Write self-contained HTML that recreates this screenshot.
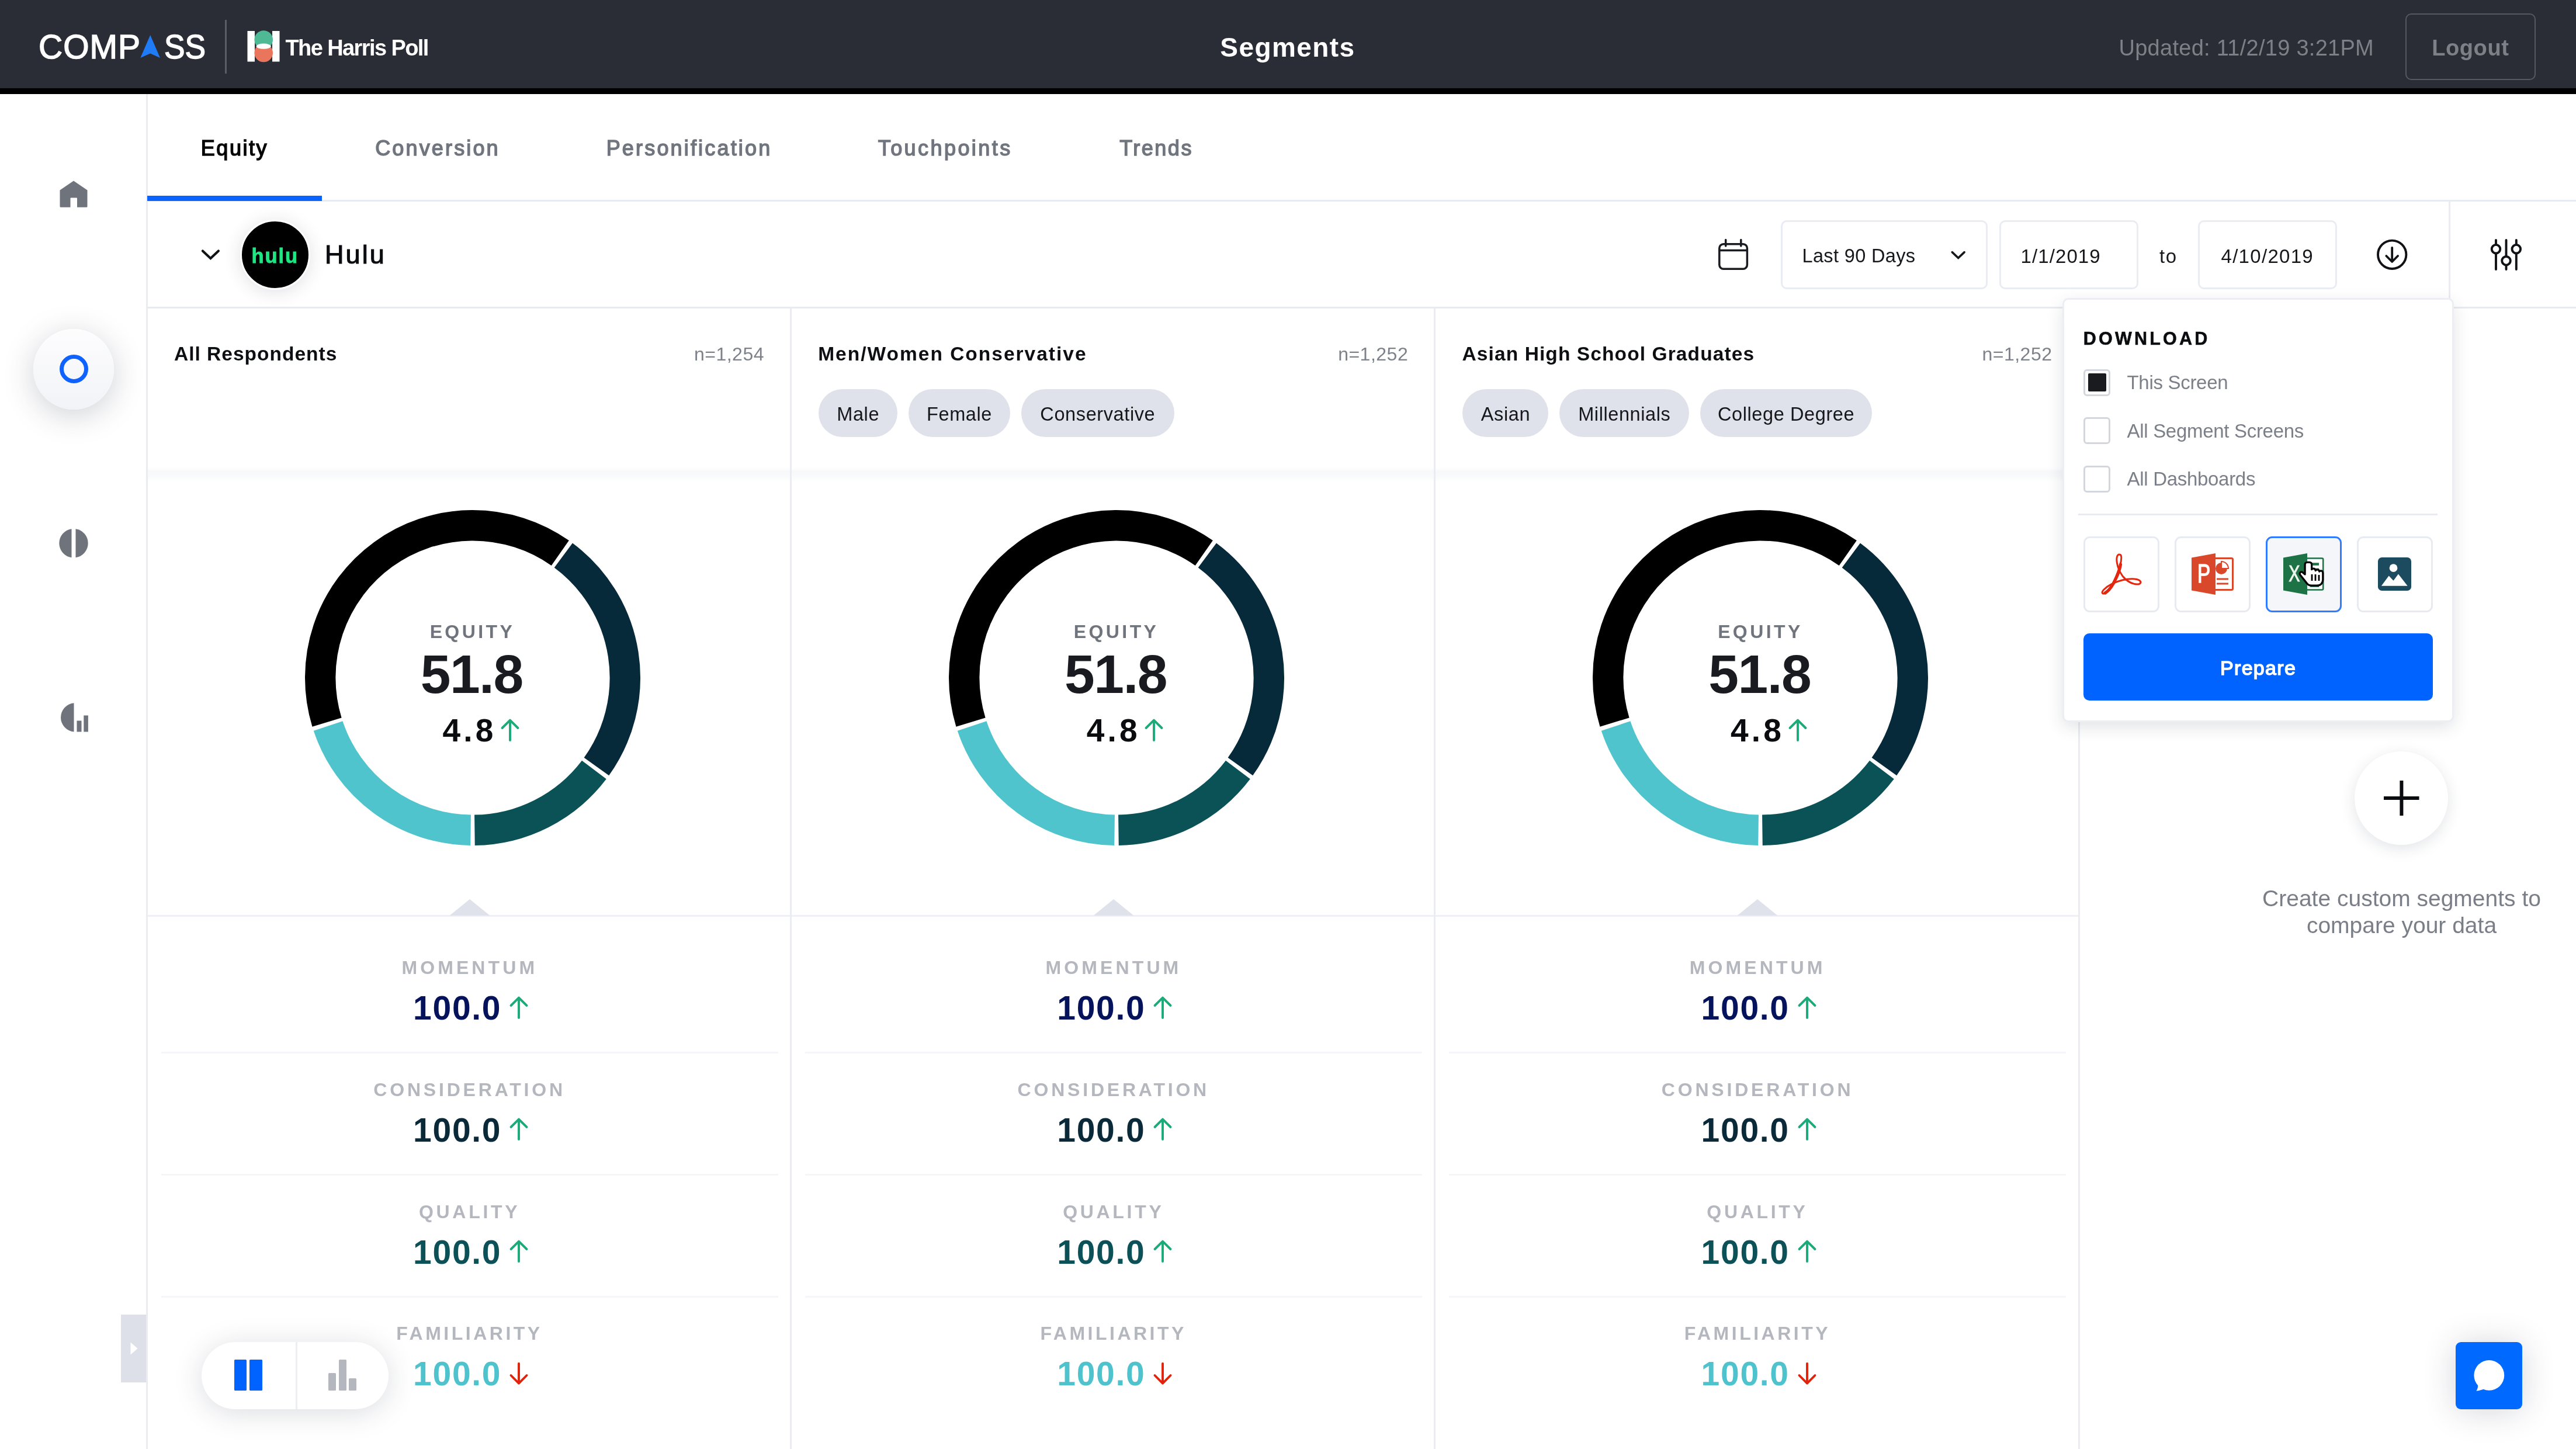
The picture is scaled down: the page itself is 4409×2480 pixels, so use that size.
<!DOCTYPE html>
<html lang="en">
<head>
<meta charset="utf-8">
<title>Compass – Segments – Equity</title>
<style>
html,body{margin:0;padding:0;}
body{width:4409px;height:2480px;overflow:hidden;background:#fff;position:relative;font-family:"Liberation Sans",sans-serif;color:#000;}
.a{position:absolute;}
.t{position:absolute;white-space:nowrap;line-height:1;margin:0;padding:0;font-weight:400;}
svg{position:absolute;overflow:visible;}
header{position:absolute;left:0;top:0;width:4409px;height:151px;background:#2a2d35;border-bottom:10px solid #000;}
.vline{position:absolute;width:3px;background:#eaecf2;}
.hline{position:absolute;height:3px;background:#e8eaf1;}
.box{position:absolute;box-sizing:border-box;border:3px solid #eaecf3;border-radius:10px;background:#fff;}
.chip{position:absolute;height:82px;border-radius:41px;background:#dfe2ea;top:666px;}
.sep{position:absolute;height:3px;background:#f5f6f9;}
.cb{position:absolute;box-sizing:border-box;width:46px;height:46px;border:3px solid #d3d6dd;border-radius:6px;background:#fff;left:3566px;}
.ib{position:absolute;box-sizing:border-box;width:130px;height:130px;border:3px solid #e8eaf1;border-radius:11px;background:#fff;top:918px;}
</style>
</head>
<body>
<div id="root" style="position:absolute;left:0;top:0;width:4409px;height:2480px;will-change:transform">
<header>
<span class="t" style="top:51.9px;font-size:57px;color:#fff;letter-spacing:1.0px;left:66.0px;-webkit-text-stroke:1.5px #fff;">COMP</span>
<span class="t" style="top:67.3px;font-size:28px;color:#1f7bf6;left:247.5px;">A</span>
<svg class="a" style="left:240px;top:60px" width="35" height="40" viewBox="0 0 35 40"><path d="M17.2 0 L34 39 L17.2 31.5 L0.3 39 Z" fill="#1f7bf6"/></svg>
<span class="t" style="top:51.9px;font-size:57px;color:#fff;left:281.0px;-webkit-text-stroke:1.5px #fff;transform:scaleX(0.935);transform-origin:0 0;">SS</span>
<div class="a" style="left:385px;top:34px;width:3px;height:92px;background:#5b5d63"></div>
<svg class="a" style="left:423px;top:52px" width="56" height="54" viewBox="0 0 56 54"><rect x="0.5" y="1" width="12.5" height="52.5" fill="#fff"/><rect x="43" y="1" width="12.5" height="52.5" fill="#fff"/><circle cx="28.2" cy="16" r="15.8" fill="#4fb894"/><circle cx="28.2" cy="38.5" r="15.8" fill="#e8755c"/><ellipse cx="28.2" cy="27.2" rx="12.5" ry="4.6" fill="#fff"/></svg>
<span class="t" style="top:63.1px;font-size:38px;font-weight:700;color:#fff;letter-spacing:-1.6px;left:488.5px;">The Harris Poll</span>
<h1 class="t" style="top:57.6px;font-size:46px;font-weight:700;color:#fff;letter-spacing:1.4px;left:2203.9px;transform:translateX(-50%);">Segments</h1>
<span class="t" style="top:62.8px;font-size:38px;color:#7d8087;letter-spacing:0.27px;left:3626.5px;">Updated: 11/2/19 3:21PM</span>
<div class="a" style="left:4117px;top:23px;width:223px;height:114px;box-sizing:border-box;border:2.5px solid #55585f;border-radius:10px"></div>
<a class="t" style="top:62.8px;font-size:38px;font-weight:700;color:#7d8087;letter-spacing:0.6px;left:4228.3px;transform:translateX(-50%);">Logout</a>
</header>
<nav>
<div class="vline" style="left:250px;top:161px;height:2319px"></div>
<svg style="left:101px;top:309px" width="50" height="46" viewBox="0 0 50 46"><path d="M25 0.5 L48.5 16.5 V44.5 Q48.5 45.8 47 45.8 H31 V30.5 Q31 29.5 30 29.5 H20.5 Q19.5 29.5 19.5 30.5 V45.8 H3 Q1.5 45.8 1.5 44.5 V16.5 Z" fill="#6f737c"/></svg>
<div class="a" style="left:57px;top:563px;width:138px;height:138px;border-radius:50%;background:linear-gradient(#fdfdfe,#f2f3f7);box-shadow:0 10px 52px rgba(40,45,70,0.22)"></div>
<div class="a" style="left:101.5px;top:607px;width:49px;height:49px;box-sizing:border-box;border-radius:50%;border:7.5px solid #0f62fe"></div>
<svg style="left:101px;top:905px" width="50" height="50" viewBox="0 0 50 50"><path d="M21.5 0.3 A24.7 24.7 0 0 0 21.5 49.2 Z" fill="#6f737c"/><path d="M28.5 0.3 A24.7 24.7 0 0 1 28.5 49.2 Z" fill="#6f737c"/></svg>
<svg style="left:101px;top:1203px" width="50" height="50" viewBox="0 0 50 50"><path d="M25.5 0.3 A24.7 24.7 0 0 0 25.5 49.5 Z" fill="#6f737c"/><rect x="30.5" y="30.5" width="8" height="19" fill="#6f737c"/><rect x="42.3" y="21.5" width="7.6" height="28" fill="#6f737c"/></svg>
</nav>
<div class="hline" style="left:252px;top:342px;width:4157px"></div>
<div class="a" style="left:252px;top:335px;width:299px;height:9px;background:#0a62ff"></div>
<a class="t" style="top:235.5px;font-size:36px;color:#050506;letter-spacing:2.55px;left:343.8px;-webkit-text-stroke:1.5px #050506;">Equity</a>
<a class="t" style="top:235.5px;font-size:36px;color:#71757e;letter-spacing:3.15px;left:642.2px;-webkit-text-stroke:1.5px #71757e;">Conversion</a>
<a class="t" style="top:235.5px;font-size:36px;color:#71757e;letter-spacing:3.17px;left:1037.7px;-webkit-text-stroke:1.5px #71757e;">Personification</a>
<a class="t" style="top:235.5px;font-size:36px;color:#71757e;letter-spacing:3.44px;left:1502.7px;-webkit-text-stroke:1.5px #71757e;">Touchpoints</a>
<a class="t" style="top:235.5px;font-size:36px;color:#71757e;letter-spacing:2.5px;left:1916.2px;-webkit-text-stroke:1.5px #71757e;">Trends</a>
<div class="hline" style="left:252px;top:525px;width:4157px"></div>
<svg style="left:344px;top:425px" width="34" height="22" viewBox="0 0 34 22"><path d="M2.9 4.4 L16.4 17.2 L29.9 4.4" fill="none" stroke="#111216" stroke-width="4.2" stroke-linecap="round" stroke-linejoin="miter"/></svg>
<div class="a" style="left:411px;top:376px;width:120px;height:120px;box-sizing:border-box;border-radius:50%;background:#000;border:3px solid #fff;box-shadow:0 4px 30px rgba(40,45,70,0.14)"></div>
<span class="t" style="top:421.0px;font-size:34.5px;font-weight:700;color:#1ce783;letter-spacing:1.9px;left:430.5px;-webkit-text-stroke:0.8px #1ce783;">hulu</span>
<span class="t" style="top:413.4px;font-size:45px;color:#0b0c0f;letter-spacing:3.1px;left:556.0px;-webkit-text-stroke:1.1px #0b0c0f;">Hulu</span>
<svg style="left:2938px;top:407px" width="58" height="58" viewBox="0 0 58 58"><rect x="4.8" y="10.8" width="47.6" height="42.5" rx="7" fill="none" stroke="#1a1b20" stroke-width="3.5"/><path d="M4.8 21.5 H52.4 M15.7 3.5 V14 M41.8 3.5 V14" fill="none" stroke="#1a1b20" stroke-width="3.5" stroke-linecap="round"/></svg>
<div class="box" style="left:3048px;top:377px;width:354px;height:118px"></div>
<span class="t" style="top:422.0px;font-size:32.5px;color:#16171b;letter-spacing:0.35px;left:3084.5px;">Last 90 Days</span>
<svg style="left:3337px;top:427px" width="30" height="20" viewBox="0 0 30 20"><path d="M4.3 4.6 L14.7 14.6 L25.1 4.6" fill="none" stroke="#16171b" stroke-width="3.6" stroke-linecap="round"/></svg>
<div class="box" style="left:3422px;top:377px;width:238px;height:118px"></div>
<span class="t" style="top:422.1px;font-size:33px;color:#16171b;letter-spacing:1.1px;left:3458.5px;">1/1/2019</span>
<span class="t" style="top:422.1px;font-size:33px;color:#16171b;letter-spacing:1.5px;left:3696.0px;">to</span>
<div class="box" style="left:3762px;top:377px;width:238px;height:118px"></div>
<span class="t" style="top:422.1px;font-size:33px;color:#16171b;letter-spacing:1.3px;left:3801.5px;">4/10/2019</span>
<svg style="left:4065px;top:407px" width="58" height="58" viewBox="0 0 58 58"><circle cx="29.2" cy="28.8" r="24.2" fill="none" stroke="#111216" stroke-width="3.9"/><path d="M29.2 17 V40.5 M19.3 31 L29.2 41 L39.1 31" fill="none" stroke="#111216" stroke-width="3.8" stroke-linecap="round" stroke-linejoin="round"/></svg>
<div class="vline" style="left:4191px;top:343px;height:184px"></div>
<svg style="left:4260px;top:407px" width="58" height="58" viewBox="0 0 58 58"><g fill="none" stroke="#111216" stroke-width="3.9" stroke-linecap="round"><path d="M12 4 V11.5 M12 27 V54"/><circle cx="12" cy="19.2" r="7.3"/><path d="M29.5 4 V31.5 M29.5 47 V54"/><circle cx="29.5" cy="39.3" r="7.3"/><path d="M46.8 4 V11.5 M46.8 27 V54"/><circle cx="46.8" cy="19.2" r="7.3"/></g></svg>
<div class="a" style="left:253px;top:800px;width:3304px;height:26px;background:linear-gradient(#fff,#f7f8fa 28%,#f9fafb 60%,#fff)"></div>
<div class="hline" style="left:253px;top:1566px;width:3304px;background:#eef0f5"></div>
<section>
<div class="vline" style="left:1352.2px;top:527px;height:1953px"></div>
<h2 class="t" style="top:589.2px;font-size:33.5px;font-weight:700;color:#0e0f12;letter-spacing:1.0px;left:298.0px;">All Respondents</h2>
<span class="t" style="top:590.2px;font-size:32px;color:#7d8189;letter-spacing:0.5px;left:1308.0px;transform:translateX(-100%);">n=1,254</span>
<svg style="left:508.7px;top:859.8px" width="600" height="600" viewBox="508.7 859.8 600 600"><g fill="none" stroke-width="52.4"><path d="M559.23 1235.83A260.8 260.8 0 0 1 958.48 946.30" stroke="#000"/><path d="M964.01 950.29A260.8 260.8 0 0 1 1020.62 1311.80" stroke="#072a3b"/><path d="M1016.57 1317.30A260.8 260.8 0 0 1 812.11 1420.58" stroke="#0b5257"/><path d="M805.29 1420.58A260.8 260.8 0 0 1 561.31 1242.34" stroke="#4fc4cd"/></g></svg>
<span class="t" style="top:1065.2px;font-size:32px;font-weight:700;color:#70747d;letter-spacing:4.4px;left:808.4px;transform:translateX(-50%);">EQUITY</span>
<span class="t" style="top:1108.1px;font-size:93px;font-weight:700;color:#1a1b20;letter-spacing:-1.5px;left:807.2px;transform:translateX(-50%);">51.8</span>
<span class="t" style="top:1222.7px;font-size:55px;font-weight:700;color:#0b0c0f;letter-spacing:5.2px;left:757.5px;">4.8</span>
<svg style="left:855.7px;top:1229.5px" width="34" height="40" viewBox="0 0 32 40"><path d="M16 37 V3 M2.5 16 L16 2.6 L29.5 16" fill="none" stroke="#1aab78" stroke-width="3.9" stroke-linecap="round" stroke-linejoin="round"/></svg>
<svg style="left:768.7px;top:1538px" width="70" height="29" viewBox="0 0 70 29"><path d="M35 1 L69.5 29 H0.5 Z" fill="#dfe2ea"/></svg>
<span class="t" style="top:1639.9px;font-size:32px;font-weight:700;color:#b4b7be;letter-spacing:5.1px;left:803.8px;transform:translateX(-50%);">MOMENTUM</span>
<span class="t" style="top:1697.0px;font-size:57px;font-weight:700;color:#05125c;letter-spacing:1.7px;left:707.1px;">100.0</span>
<svg style="left:872.1px;top:1704.5px" width="32" height="40" viewBox="0 0 32 40"><path d="M16 37 V3 M2.5 16 L16 2.6 L29.5 16" fill="none" stroke="#1aab78" stroke-width="3.9" stroke-linecap="round" stroke-linejoin="round"/></svg>
<div class="sep" style="left:275.8px;top:1800.0px;width:1056px"></div>
<span class="t" style="top:1848.7px;font-size:32px;font-weight:700;color:#b4b7be;letter-spacing:4.8px;left:803.6px;transform:translateX(-50%);">CONSIDERATION</span>
<span class="t" style="top:1905.8px;font-size:57px;font-weight:700;color:#0a2a3a;letter-spacing:1.7px;left:707.1px;">100.0</span>
<svg style="left:872.1px;top:1913.3px" width="32" height="40" viewBox="0 0 32 40"><path d="M16 37 V3 M2.5 16 L16 2.6 L29.5 16" fill="none" stroke="#1aab78" stroke-width="3.9" stroke-linecap="round" stroke-linejoin="round"/></svg>
<div class="sep" style="left:275.8px;top:2008.8px;width:1056px"></div>
<span class="t" style="top:2057.5px;font-size:32px;font-weight:700;color:#b4b7be;letter-spacing:4.7px;left:803.6px;transform:translateX(-50%);">QUALITY</span>
<span class="t" style="top:2114.6px;font-size:57px;font-weight:700;color:#0c5157;letter-spacing:1.7px;left:707.1px;">100.0</span>
<svg style="left:872.1px;top:2122.1px" width="32" height="40" viewBox="0 0 32 40"><path d="M16 37 V3 M2.5 16 L16 2.6 L29.5 16" fill="none" stroke="#1aab78" stroke-width="3.9" stroke-linecap="round" stroke-linejoin="round"/></svg>
<div class="sep" style="left:275.8px;top:2217.6px;width:1056px"></div>
<span class="t" style="top:2266.3px;font-size:32px;font-weight:700;color:#b4b7be;letter-spacing:4.5px;left:803.5px;transform:translateX(-50%);">FAMILIARITY</span>
<span class="t" style="top:2323.4px;font-size:57px;font-weight:700;color:#4fc3cd;letter-spacing:1.7px;left:707.1px;">100.0</span>
<svg style="left:872.1px;top:2330.9px" width="32" height="40" viewBox="0 0 32 40"><path d="M16 2.6 V36 M2.5 23 L16 36.6 L29.5 23" fill="none" stroke="#e0240b" stroke-width="3.9" stroke-linecap="round" stroke-linejoin="round"/></svg>
</section>
<section>
<div class="vline" style="left:2454.4px;top:527px;height:1953px"></div>
<h2 class="t" style="top:589.2px;font-size:33.5px;font-weight:700;color:#0e0f12;letter-spacing:2.0px;left:1400.2px;">Men/Women Conservative</h2>
<span class="t" style="top:590.2px;font-size:32px;color:#7d8189;letter-spacing:0.5px;left:2410.2px;transform:translateX(-100%);">n=1,252</span>
<div class="chip" style="left:1400.9px;width:135px"></div>
<span class="t" style="top:692.5px;font-size:32.5px;color:#16171b;letter-spacing:0.6px;left:1468.7px;transform:translateX(-50%);">Male</span>
<div class="chip" style="left:1554.7px;width:174px"></div>
<span class="t" style="top:692.5px;font-size:32.5px;color:#16171b;letter-spacing:0.6px;left:1642.0px;transform:translateX(-50%);">Female</span>
<div class="chip" style="left:1747.5px;width:262px"></div>
<span class="t" style="top:692.5px;font-size:32.5px;color:#16171b;letter-spacing:0.6px;left:1878.8px;transform:translateX(-50%);">Conservative</span>
<svg style="left:1610.9px;top:859.8px" width="600" height="600" viewBox="1610.9 859.8 600 600"><g fill="none" stroke-width="52.4"><path d="M1661.43 1235.83A260.8 260.8 0 0 1 2060.68 946.30" stroke="#000"/><path d="M2066.21 950.29A260.8 260.8 0 0 1 2122.82 1311.80" stroke="#072a3b"/><path d="M2118.77 1317.30A260.8 260.8 0 0 1 1914.31 1420.58" stroke="#0b5257"/><path d="M1907.49 1420.58A260.8 260.8 0 0 1 1663.51 1242.34" stroke="#4fc4cd"/></g></svg>
<span class="t" style="top:1065.2px;font-size:32px;font-weight:700;color:#70747d;letter-spacing:4.4px;left:1910.6px;transform:translateX(-50%);">EQUITY</span>
<span class="t" style="top:1108.1px;font-size:93px;font-weight:700;color:#1a1b20;letter-spacing:-1.5px;left:1909.5px;transform:translateX(-50%);">51.8</span>
<span class="t" style="top:1222.7px;font-size:55px;font-weight:700;color:#0b0c0f;letter-spacing:5.2px;left:1859.7px;">4.8</span>
<svg style="left:1957.9px;top:1229.5px" width="34" height="40" viewBox="0 0 32 40"><path d="M16 37 V3 M2.5 16 L16 2.6 L29.5 16" fill="none" stroke="#1aab78" stroke-width="3.9" stroke-linecap="round" stroke-linejoin="round"/></svg>
<svg style="left:1870.9px;top:1538px" width="70" height="29" viewBox="0 0 70 29"><path d="M35 1 L69.5 29 H0.5 Z" fill="#dfe2ea"/></svg>
<span class="t" style="top:1639.9px;font-size:32px;font-weight:700;color:#b4b7be;letter-spacing:5.1px;left:1906.0px;transform:translateX(-50%);">MOMENTUM</span>
<span class="t" style="top:1697.0px;font-size:57px;font-weight:700;color:#05125c;letter-spacing:1.7px;left:1809.3px;">100.0</span>
<svg style="left:1974.3px;top:1704.5px" width="32" height="40" viewBox="0 0 32 40"><path d="M16 37 V3 M2.5 16 L16 2.6 L29.5 16" fill="none" stroke="#1aab78" stroke-width="3.9" stroke-linecap="round" stroke-linejoin="round"/></svg>
<div class="sep" style="left:1378.0px;top:1800.0px;width:1056px"></div>
<span class="t" style="top:1848.7px;font-size:32px;font-weight:700;color:#b4b7be;letter-spacing:4.8px;left:1905.8px;transform:translateX(-50%);">CONSIDERATION</span>
<span class="t" style="top:1905.8px;font-size:57px;font-weight:700;color:#0a2a3a;letter-spacing:1.7px;left:1809.3px;">100.0</span>
<svg style="left:1974.3px;top:1913.3px" width="32" height="40" viewBox="0 0 32 40"><path d="M16 37 V3 M2.5 16 L16 2.6 L29.5 16" fill="none" stroke="#1aab78" stroke-width="3.9" stroke-linecap="round" stroke-linejoin="round"/></svg>
<div class="sep" style="left:1378.0px;top:2008.8px;width:1056px"></div>
<span class="t" style="top:2057.5px;font-size:32px;font-weight:700;color:#b4b7be;letter-spacing:4.7px;left:1905.8px;transform:translateX(-50%);">QUALITY</span>
<span class="t" style="top:2114.6px;font-size:57px;font-weight:700;color:#0c5157;letter-spacing:1.7px;left:1809.3px;">100.0</span>
<svg style="left:1974.3px;top:2122.1px" width="32" height="40" viewBox="0 0 32 40"><path d="M16 37 V3 M2.5 16 L16 2.6 L29.5 16" fill="none" stroke="#1aab78" stroke-width="3.9" stroke-linecap="round" stroke-linejoin="round"/></svg>
<div class="sep" style="left:1378.0px;top:2217.6px;width:1056px"></div>
<span class="t" style="top:2266.3px;font-size:32px;font-weight:700;color:#b4b7be;letter-spacing:4.5px;left:1905.7px;transform:translateX(-50%);">FAMILIARITY</span>
<span class="t" style="top:2323.4px;font-size:57px;font-weight:700;color:#4fc3cd;letter-spacing:1.7px;left:1809.3px;">100.0</span>
<svg style="left:1974.3px;top:2330.9px" width="32" height="40" viewBox="0 0 32 40"><path d="M16 2.6 V36 M2.5 23 L16 36.6 L29.5 23" fill="none" stroke="#e0240b" stroke-width="3.9" stroke-linecap="round" stroke-linejoin="round"/></svg>
</section>
<section>
<div class="vline" style="left:3556.7px;top:527px;height:1953px"></div>
<h2 class="t" style="top:589.2px;font-size:33.5px;font-weight:700;color:#0e0f12;letter-spacing:1.1px;left:2502.5px;">Asian High School Graduates</h2>
<span class="t" style="top:590.2px;font-size:32px;color:#7d8189;letter-spacing:0.5px;left:3512.5px;transform:translateX(-100%);">n=1,252</span>
<div class="chip" style="left:2503.2px;width:147px"></div>
<span class="t" style="top:692.5px;font-size:32.5px;color:#16171b;letter-spacing:0.6px;left:2577.0px;transform:translateX(-50%);">Asian</span>
<div class="chip" style="left:2669.0px;width:222px"></div>
<span class="t" style="top:692.5px;font-size:32.5px;color:#16171b;letter-spacing:0.6px;left:2780.3px;transform:translateX(-50%);">Millennials</span>
<div class="chip" style="left:2909.8px;width:294px"></div>
<span class="t" style="top:692.5px;font-size:32.5px;color:#16171b;letter-spacing:0.6px;left:3057.1px;transform:translateX(-50%);">College Degree</span>
<svg style="left:2713.2px;top:859.8px" width="600" height="600" viewBox="2713.2 859.8 600 600"><g fill="none" stroke-width="52.4"><path d="M2763.73 1235.83A260.8 260.8 0 0 1 3162.98 946.30" stroke="#000"/><path d="M3168.51 950.29A260.8 260.8 0 0 1 3225.12 1311.80" stroke="#072a3b"/><path d="M3221.07 1317.30A260.8 260.8 0 0 1 3016.61 1420.58" stroke="#0b5257"/><path d="M3009.79 1420.58A260.8 260.8 0 0 1 2765.81 1242.34" stroke="#4fc4cd"/></g></svg>
<span class="t" style="top:1065.2px;font-size:32px;font-weight:700;color:#70747d;letter-spacing:4.4px;left:3012.9px;transform:translateX(-50%);">EQUITY</span>
<span class="t" style="top:1108.1px;font-size:93px;font-weight:700;color:#1a1b20;letter-spacing:-1.5px;left:3011.8px;transform:translateX(-50%);">51.8</span>
<span class="t" style="top:1222.7px;font-size:55px;font-weight:700;color:#0b0c0f;letter-spacing:5.2px;left:2962.0px;">4.8</span>
<svg style="left:3060.2px;top:1229.5px" width="34" height="40" viewBox="0 0 32 40"><path d="M16 37 V3 M2.5 16 L16 2.6 L29.5 16" fill="none" stroke="#1aab78" stroke-width="3.9" stroke-linecap="round" stroke-linejoin="round"/></svg>
<svg style="left:2973.2px;top:1538px" width="70" height="29" viewBox="0 0 70 29"><path d="M35 1 L69.5 29 H0.5 Z" fill="#dfe2ea"/></svg>
<span class="t" style="top:1639.9px;font-size:32px;font-weight:700;color:#b4b7be;letter-spacing:5.1px;left:3008.2px;transform:translateX(-50%);">MOMENTUM</span>
<span class="t" style="top:1697.0px;font-size:57px;font-weight:700;color:#05125c;letter-spacing:1.7px;left:2911.6px;">100.0</span>
<svg style="left:3076.6px;top:1704.5px" width="32" height="40" viewBox="0 0 32 40"><path d="M16 37 V3 M2.5 16 L16 2.6 L29.5 16" fill="none" stroke="#1aab78" stroke-width="3.9" stroke-linecap="round" stroke-linejoin="round"/></svg>
<div class="sep" style="left:2480.3px;top:1800.0px;width:1056px"></div>
<span class="t" style="top:1848.7px;font-size:32px;font-weight:700;color:#b4b7be;letter-spacing:4.8px;left:3008.1px;transform:translateX(-50%);">CONSIDERATION</span>
<span class="t" style="top:1905.8px;font-size:57px;font-weight:700;color:#0a2a3a;letter-spacing:1.7px;left:2911.6px;">100.0</span>
<svg style="left:3076.6px;top:1913.3px" width="32" height="40" viewBox="0 0 32 40"><path d="M16 37 V3 M2.5 16 L16 2.6 L29.5 16" fill="none" stroke="#1aab78" stroke-width="3.9" stroke-linecap="round" stroke-linejoin="round"/></svg>
<div class="sep" style="left:2480.3px;top:2008.8px;width:1056px"></div>
<span class="t" style="top:2057.5px;font-size:32px;font-weight:700;color:#b4b7be;letter-spacing:4.7px;left:3008.0px;transform:translateX(-50%);">QUALITY</span>
<span class="t" style="top:2114.6px;font-size:57px;font-weight:700;color:#0c5157;letter-spacing:1.7px;left:2911.6px;">100.0</span>
<svg style="left:3076.6px;top:2122.1px" width="32" height="40" viewBox="0 0 32 40"><path d="M16 37 V3 M2.5 16 L16 2.6 L29.5 16" fill="none" stroke="#1aab78" stroke-width="3.9" stroke-linecap="round" stroke-linejoin="round"/></svg>
<div class="sep" style="left:2480.3px;top:2217.6px;width:1056px"></div>
<span class="t" style="top:2266.3px;font-size:32px;font-weight:700;color:#b4b7be;letter-spacing:4.5px;left:3007.9px;transform:translateX(-50%);">FAMILIARITY</span>
<span class="t" style="top:2323.4px;font-size:57px;font-weight:700;color:#4fc3cd;letter-spacing:1.7px;left:2911.6px;">100.0</span>
<svg style="left:3076.6px;top:2330.9px" width="32" height="40" viewBox="0 0 32 40"><path d="M16 2.6 V36 M2.5 23 L16 36.6 L29.5 23" fill="none" stroke="#e0240b" stroke-width="3.9" stroke-linecap="round" stroke-linejoin="round"/></svg>
</section>
<aside>
<div class="a" style="left:4030px;top:1286px;width:160px;height:160px;border-radius:50%;background:#fff;box-shadow:0 6px 26px rgba(40,45,70,0.13)"></div>
<svg style="left:4078px;top:1334px" width="64" height="64" viewBox="0 0 64 64"><path d="M32.4 2 V62 M2 32 H62.5" fill="none" stroke="#0b0c0f" stroke-width="6"/></svg>
<span class="t" style="top:1518.0px;font-size:39px;color:#7a7e87;left:4110.5px;transform:translateX(-50%);">Create custom segments to</span>
<span class="t" style="top:1563.5px;font-size:39px;color:#7a7e87;left:4110.5px;transform:translateX(-50%);">compare your data</span>
</aside>
<div class="a" style="left:3530px;top:510px;width:670px;height:726px;box-sizing:border-box;background:#fff;border:3px solid #eceef3;border-radius:10px;box-shadow:0 9px 28px rgba(40,45,70,0.13)"></div>
<h3 class="t" style="top:564.4px;font-size:30.5px;font-weight:700;color:#0b0c0f;letter-spacing:4.2px;left:3565.8px;-webkit-text-stroke:0.6px #0b0c0f;">DOWNLOAD</h3>
<div class="cb" style="top:631.5px"></div>
<div class="a" style="left:3574px;top:639.2px;width:31px;height:31px;background:#1a1b1f;border-radius:2px"></div>
<label class="t" style="top:637.9px;font-size:33px;color:#7b7f88;letter-spacing:-0.3px;left:3640.5px;">This Screen</label>
<div class="cb" style="top:714.2px"></div>
<label class="t" style="top:720.6px;font-size:33px;color:#7b7f88;letter-spacing:-0.3px;left:3640.5px;">All Segment Screens</label>
<div class="cb" style="top:796.9px"></div>
<label class="t" style="top:803.3px;font-size:33px;color:#7b7f88;letter-spacing:-0.3px;left:3640.5px;">All Dashboards</label>
<div class="hline" style="left:3557px;top:879px;width:615px"></div>
<div class="ib" style="left:3565.5px"></div>
<div class="ib" style="left:3721.6px"></div>
<div class="ib" style="left:3877.7px;border-color:#2f7cff;background:#f5f6fa"></div>
<div class="ib" style="left:4033.8px"></div>
<svg style="left:3594px;top:946px" width="73" height="73" viewBox="0 0 73 73"><path d="M33.5 3 C29 3 28 10 29.5 18 C31 27 34 33 39 40 C46 49 56 54 64 54 C70 54 71.5 50 68 47.5 C63 44 50 44 38 47 C26 50 14 56 7 63 C2 68 4 71.5 8.5 69.5 C15 66.5 22 54 28 40 C33 28 37 14 36.8 8 C36.7 4.5 35.5 3 33.5 3 Z" fill="none" stroke="#e3260d" stroke-width="3" stroke-linejoin="round"/><path d="M35.5 20 C34 30 29 42 23 53 C19 60 14 66 9 69" fill="none" stroke="#e3260d" stroke-width="5.2" stroke-linecap="round"/></svg>
<svg style="left:3750px;top:946px" width="74" height="73" viewBox="0 0 74 73"><rect x="36" y="9.5" width="35.5" height="54" rx="2" fill="#fff" stroke="#d9482b" stroke-width="3"/><path d="M44 45 H64 M44 53 H64" stroke="#d9482b" stroke-width="3"/><circle cx="52" cy="27" r="10" fill="#d9482b"/><path d="M52 27 V15 A12 12 0 0 1 64 27 Z" fill="#fff" stroke="#d9482b" stroke-width="2"/><path d="M1 8.5 L42 1 V72 L1 64.5 Z" fill="#d9482b"/></svg>
<span class="t" style="top:959.4px;font-size:45px;color:#fff;left:3771.8px;transform:translateX(-50%);-webkit-text-stroke:1.6px #fff;transform:translateX(-50%) scaleX(0.74);">P</span>
<svg style="left:3907px;top:946px" width="74" height="73" viewBox="0 0 74 73"><rect x="36" y="9.5" width="33.2" height="54" rx="2" fill="#fff" stroke="#1e7346" stroke-width="2.6"/><path d="M47 19.5 H62 M47 29 H62 M47 38.5 H62 M47 48 H62 M47 56.5 H62" stroke="#1e7346" stroke-width="4.6"/><path d="M1 8.5 L42 1 V72 L1 64.5 Z" fill="#1e7346"/></svg>
<span class="t" style="top:962.3px;font-size:39px;color:#eef5f0;left:3926.8px;transform:translateX(-50%);-webkit-text-stroke:1.0px #eef5f0;transform:translateX(-50%) scaleX(0.74);">X</span>
<svg style="left:3933px;top:959px" width="48" height="48" viewBox="0 0 48 48"><path d="M14.5 3.5 C12 3.5 10.5 5.3 10.5 7.5 V25 L6.8 21.8 C5 20.3 2.8 20.6 1.8 22 C0.8 23.4 1.2 25.2 2.5 26.6 L13.5 40.5 C15.5 43.5 18 45 22 45 H32 C38.5 45 42.5 40.5 42.5 34.5 V22.5 C42.5 20 40.8 18.6 39 18.6 C37.8 18.6 36.8 19.1 36.2 20 C35.9 17.8 34.4 16.5 32.5 16.5 C31.1 16.5 30 17.1 29.4 18.2 C29 16 27.5 14.8 25.6 14.8 C24.3 14.8 23.2 15.4 22.6 16.3 V7.5 C22.6 5.3 21 3.5 18.6 3.5 Z" transform="translate(2 0) scale(0.96)" fill="#fff" stroke="#000" stroke-width="3.4" stroke-linejoin="round"/><path d="M24 24 V35 M30 24 V35 M36 25 V35" stroke="#000" stroke-width="2.8"/></svg>
<svg style="left:4069.3px;top:952.8px" width="59" height="59" viewBox="0 0 60 60"><rect x="1" y="1" width="58" height="58" rx="7" fill="#1c4a5e"/><circle cx="28" cy="19.5" r="7" fill="#fff"/><path d="M7 50.5 L20 33 L28 41.5 L36.5 30 L52.5 50.5 Z" fill="#fff"/></svg>
<div class="a" style="left:3565.5px;top:1084px;width:598px;height:114.5px;background:#0062ff;border-radius:10px"></div>
<span class="t" style="top:1126.0px;font-size:34px;color:#fff;letter-spacing:1.3px;left:3865.1px;transform:translateX(-50%);-webkit-text-stroke:1.5px #fff;">Prepare</span>
<div class="a" style="left:206.8px;top:2250px;width:43.5px;height:115.5px;background:#dde0e9"></div>
<svg style="left:221.5px;top:2296px" width="15" height="24" viewBox="0 0 16 26"><path d="M1.5 1.5 L14.5 13 L1.5 24.5 Z" fill="#fff"/></svg>
<div class="a" style="left:344.5px;top:2297px;width:320.5px;height:114.5px;border-radius:58px;background:#fff;box-shadow:0 6px 48px rgba(40,45,70,0.17)"></div>
<div class="a" style="left:505.5px;top:2297px;width:3px;height:114.5px;background:#eceef4"></div>
<div class="a" style="left:400.5px;top:2327px;width:21.7px;height:53px;background:#0062ff;border-radius:1.5px"></div>
<div class="a" style="left:427px;top:2327px;width:22.4px;height:53px;background:#0062ff;border-radius:1.5px"></div>
<div class="a" style="left:561.5px;top:2350px;width:13px;height:30px;background:#b4b7be;border-radius:1.5px"></div>
<div class="a" style="left:579.5px;top:2327px;width:13px;height:53px;background:#b4b7be;border-radius:1.5px"></div>
<div class="a" style="left:597px;top:2359px;width:13px;height:21px;background:#b4b7be;border-radius:1.5px"></div>
<div class="a" style="left:4202.5px;top:2297px;width:114.5px;height:114.5px;border-radius:9px;background:#0069ff;box-shadow:0 3px 55px rgba(40,45,70,0.20)"></div>
<svg style="left:4227px;top:2324px" width="66" height="62" viewBox="0 0 66 62"><circle cx="33.3" cy="29.9" r="25.9" fill="#fff"/><path d="M14 45.5 C14.5 50 13.5 53.5 11.3 56.6 C16 56.2 21 55 25.5 52.5 Z" fill="#fff"/></svg>
</div>
</body>
</html>
